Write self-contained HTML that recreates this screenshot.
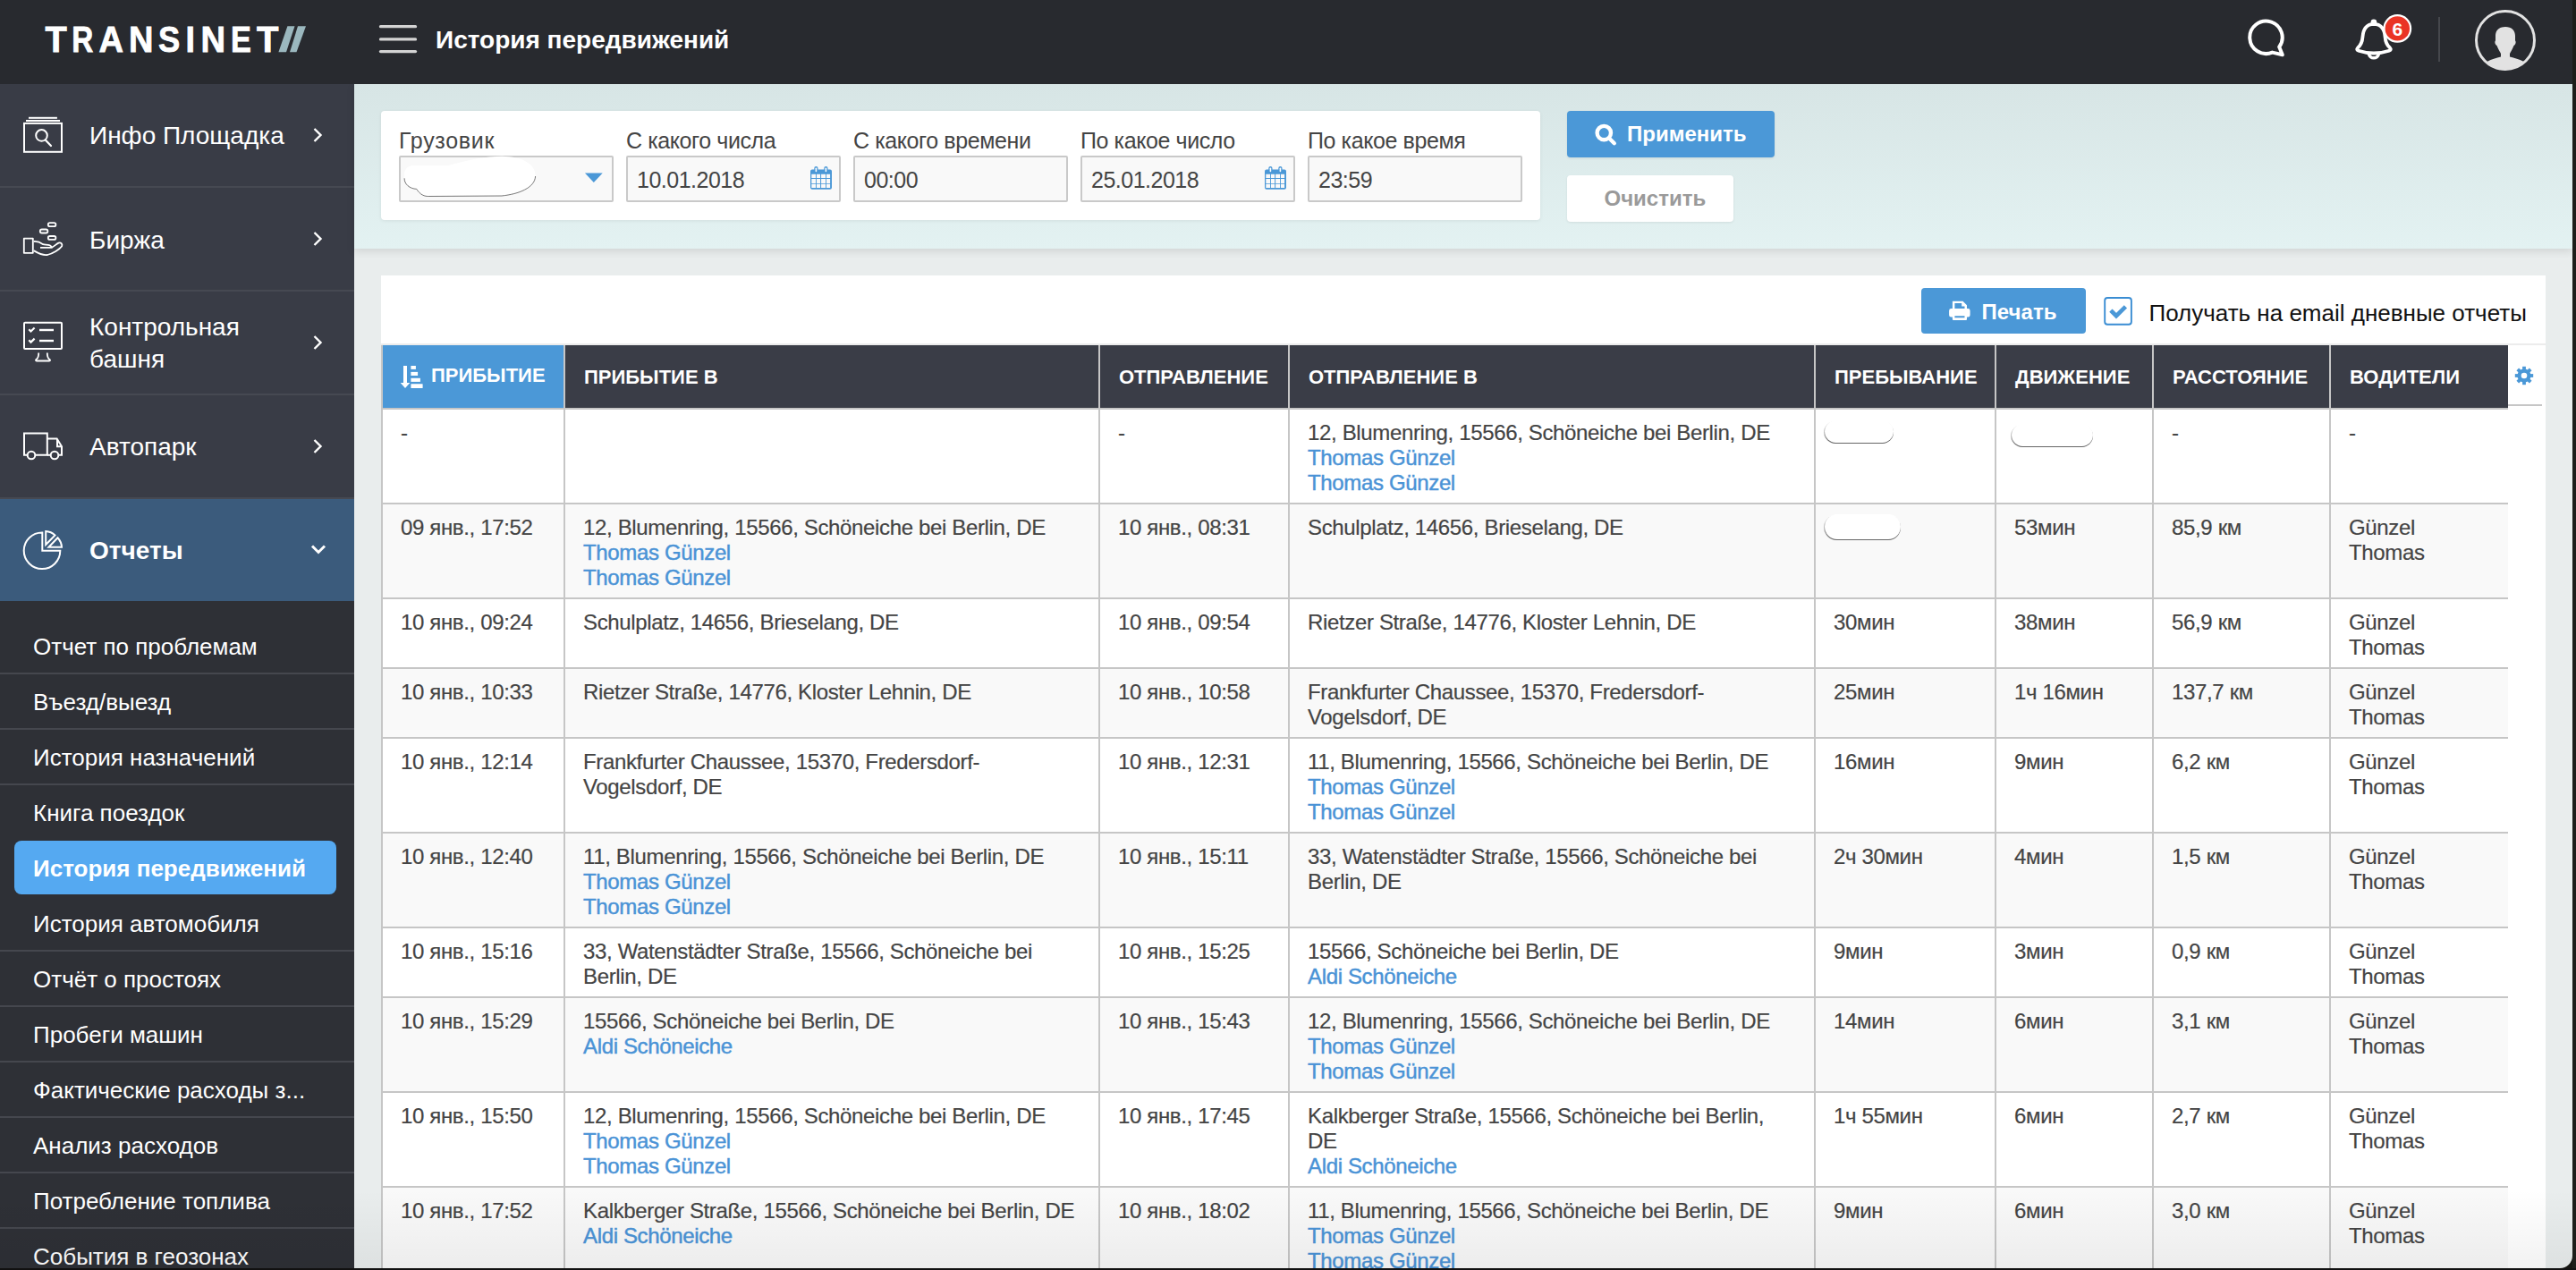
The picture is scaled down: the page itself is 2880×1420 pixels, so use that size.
<!DOCTYPE html>
<html><head><meta charset="utf-8">
<style>
*{box-sizing:border-box;margin:0;padding:0}
html,body{width:2880px;height:1420px;overflow:hidden}
body{position:relative;background:#e9eded;font-family:"Liberation Sans",sans-serif;color:#444}
.abs{position:absolute}
#hdr{position:absolute;left:0;top:0;width:2880px;height:94px;background:#282a2f}
#side{position:absolute;left:0;top:94px;width:396px;height:1326px;background:#2e3036}
.mi{position:absolute;left:0;width:396px;height:114px;background:#393c46}
.msep{position:absolute;left:0;width:396px;height:2px;background:#464952}
.mt{position:absolute;left:100px;color:#fff;font-size:28px;line-height:28px;white-space:nowrap}
.chev{position:absolute;left:346px}
.sub{position:absolute;left:37px;color:#fff;font-size:26px;line-height:26px;white-space:nowrap}
#teal{position:absolute;left:396px;top:94px;width:2480px;height:184px;background:linear-gradient(#d7e5e5,#e3f2f2);box-shadow:0 3px 9px rgba(0,0,0,.11)}
#fcard{position:absolute;left:426px;top:124px;width:1296px;height:122px;background:#fff;border-radius:4px;box-shadow:0 1px 4px rgba(0,0,0,.07)}
.lbl{position:absolute;top:145px;font-size:25px;line-height:25px;color:#444;letter-spacing:-0.4px;white-space:nowrap}
.inp{position:absolute;top:174px;width:240px;height:52px;border-radius:2px;border:2px solid #c9c9c9;background:#f9f9f9}
.itx{position:absolute;top:189px;font-size:25px;line-height:25px;color:#444;letter-spacing:-0.5px}
.btn{position:absolute;border-radius:4px;font-weight:700;font-size:24px;line-height:24px;white-space:nowrap}
#card{position:absolute;left:426px;top:308px;width:2420px;height:1200px;background:#fff}
.th{position:absolute;top:386px;height:70px;color:#fff;font-weight:700;font-size:22px;line-height:22px;white-space:nowrap}
.sorti{position:absolute;left:12px;top:14px}
.td{position:absolute;font-size:24px;line-height:28px;letter-spacing:-0.35px;color:#444;white-space:nowrap;-webkit-text-stroke:0.2px #444}
.lk{color:#4a93d6;-webkit-text-stroke:0.45px #4a93d6}
.blob{position:absolute;background:#fff;border-radius:14px;box-shadow:0 1px 0 #666, -1px 1px 0 rgba(0,0,0,.25)}
</style></head><body>

<div id="hdr">
  <svg class="abs" style="left:0;top:0" width="360" height="94">
    <g font-family="Liberation Sans" font-weight="700" font-size="40" fill="#fff" stroke="#fff" stroke-width="0.8">
      <text transform="translate(50.60 58.1) scale(0.992 1)">T</text><text transform="translate(80.34 58.1) scale(0.831 1)">R</text><text transform="translate(110.45 58.1) scale(0.952 1)">A</text><text transform="translate(144.10 58.1) scale(0.950 1)">N</text><text transform="translate(177.09 58.1) scale(0.908 1)">S</text><text transform="translate(207.51 58.1) scale(0.943 1)">I</text><text transform="translate(224.49 58.1) scale(0.954 1)">N</text><text transform="translate(257.99 58.1) scale(0.857 1)">E</text><text transform="translate(287.00 58.1) scale(1.000 1)">T</text>
    </g>
    <polygon points="311.4,58.3 320,58.3 329.5,29.3 321.4,29.3" fill="#9bb8bf"/>
    <polygon points="324,58.3 331.5,58.3 342,29.3 333,29.3" fill="#9bb8bf"/>
  </svg>
  <svg class="abs" style="left:420px;top:24px" width="50" height="40"><g stroke="#d4d4d4" stroke-width="3.3" stroke-linecap="round"><line x1="5.5" y1="5.7" x2="44.5" y2="5.7"/><line x1="5.5" y1="19.9" x2="44.5" y2="19.9"/><line x1="5.5" y1="33.6" x2="44.5" y2="33.6"/></g></svg>
  <div class="abs" style="left:487px;top:30.6px;font-size:28px;line-height:28px;font-weight:700;color:#fff;white-space:nowrap">История передвижений</div>
  <!-- chat -->
  <svg class="abs" style="left:2505px;top:15px" width="60" height="55" viewBox="0 0 60 55"><path d="M43.2 37.5 A18.2 18.2 0 1 0 35.5 43.6 L46.8 46.2 Z" fill="none" stroke="#fff" stroke-width="4" stroke-linejoin="round"/></svg>
  <!-- bell -->
  <svg class="abs" style="left:2625px;top:10px" width="80" height="65" viewBox="0 0 80 65">
    <path d="M28.9 16.8 C20 17 17 24 16.5 31 C16 38 14 41 11 43.5 C9.5 45 10 46 12 46.7 C18 48.7 23 49.5 28.9 49.5 C35 49.5 40 48.7 46 46.7 C48 46 48.5 45 47 43.5 C44 41 42 38 41.5 31 C41 24 38 17 28.9 16.8 Z" fill="none" stroke="#fff" stroke-width="3.8" stroke-linejoin="round"/>
    <circle cx="28.9" cy="14.8" r="3.3" fill="#fff"/>
    <path d="M23.4 50.3 A5.6 5.6 0 0 0 34.4 50.3" fill="none" stroke="#fff" stroke-width="3.5"/>
    <circle cx="55.3" cy="21.9" r="14.8" fill="#ea3425" stroke="#fff" stroke-width="2.2"/>
    <text x="55.3" y="29.6" text-anchor="middle" font-family="Liberation Sans" font-weight="700" font-size="21" fill="#fff">6</text>
  </svg>
  <div class="abs" style="left:2726px;top:19px;width:2px;height:50px;background:#45474c"></div>
  <!-- avatar -->
  <svg class="abs" style="left:2760px;top:5px" width="85" height="80" viewBox="0 0 85 80">
    <defs><clipPath id="avc"><circle cx="41" cy="40" r="32.5"/></clipPath></defs>
    <g clip-path="url(#avc)"><path d="M41 24.9 C34 24.9 30 29 30 35 L30 40.5 C29 41 29 44.5 31.5 46 C33 50 35 53 36 55 L36 58.5 C31 59.5 25 61.5 21.4 63.6 L15 80 L67 80 L60.8 63.6 C57 61.5 51 59.5 46 58.5 L46 55 C47 53 49 50 50.5 46 C53 44.5 53 41 52 40.5 L52 35 C52 29 48 24.9 41 24.9 Z" fill="#e2e2e2"/></g>
    <circle cx="41" cy="40" r="32.5" fill="none" stroke="#e2e2e2" stroke-width="3"/>
  </svg>
</div>

<div id="side">
  <div class="mi" style="top:0"></div>
  <div class="msep" style="top:114px"></div>
  <div class="mi" style="top:116px"></div>
  <div class="msep" style="top:230px"></div>
  <div class="mi" style="top:232px"></div>
  <div class="msep" style="top:346px"></div>
  <div class="mi" style="top:348px"></div>
  <div class="msep" style="top:462px"></div>
  <div class="mi" style="top:464px;background:#3b5b7c"></div>
</div>
<!-- sidebar icons (absolute page coords) -->
<svg class="abs" style="left:20px;top:120px" width="60" height="60" viewBox="0 0 60 60"><g fill="none" stroke="#fff" stroke-width="2"><rect x="7" y="17.9" width="42" height="31.9"/><line x1="12" y1="11.8" x2="43.9" y2="11.8"/><line x1="9" y1="15" x2="47" y2="15"/><circle cx="26.5" cy="31.4" r="6.3"/><line x1="31" y1="36.8" x2="37" y2="43" stroke-width="2.2" stroke-linecap="round"/></g></svg>
<svg class="abs" style="left:20px;top:240px" width="60" height="60" viewBox="0 0 60 60"><g fill="none" stroke="#fff" stroke-width="1.8" stroke-linejoin="round"><rect x="6.8" y="26.6" width="10" height="16.2"/><rect x="33.8" y="9.2" width="8.6" height="3.9" rx="1.95"/><rect x="24.8" y="16.5" width="8.6" height="4" rx="2"/><rect x="33.8" y="24" width="8.6" height="3.9" rx="1.95"/><path d="M17.7 30 C22 29.6 25 31 28.2 33.2 C30 33.8 33.5 33.2 35.6 34.2 C37 35 37.8 36 37.8 36.8 L25 36.8"/><path d="M37.8 36.8 C41 35 43.5 32.5 45.5 31.6 C48 30.6 50 33 49.2 35.3 C46.5 39 39 43.5 33 45 C27.5 46 22.5 43 17.7 40.2"/></g></svg>
<svg class="abs" style="left:20px;top:350px" width="60" height="60" viewBox="0 0 60 60"><g fill="none" stroke="#fff" stroke-width="2"><rect x="7" y="10.7" width="42" height="29.2" rx="1"/><path d="M12.3 18.2 L14.5 20.5 L18.6 16.5" stroke-width="2.2"/><path d="M12.3 30.3 L14.5 32.6 L18.6 28.6" stroke-width="2.2"/><line x1="24" y1="19" x2="40" y2="19" stroke-width="2.4"/><line x1="24" y1="31" x2="40" y2="31" stroke-width="2.4"/><path d="M23.2 44.5 C23.2 48 23.2 50 21 51.5 C19.5 52.5 19.8 53.5 21 53.5 L35 53.5 C36.3 53.5 36.5 52.5 35 51.5 C32.8 50 32.8 48 32.8 44.5" stroke-width="1.8"/></g></svg>
<svg class="abs" style="left:20px;top:470px" width="60" height="60" viewBox="0 0 60 60"><g fill="none" stroke="#fff" stroke-width="2"><path d="M10.7 38.8 L7 38.8 L7 14.6 L32.8 14.6 L32.8 38.8 L19.3 38.8"/><path d="M32.8 20.5 L43.6 20.5 L49 29.3 L49 38.8 L45.3 38.8"/><path d="M44 21 L44 29.3 L48.5 29.3"/><line x1="32.8" y1="38.8" x2="36.7" y2="38.8"/><circle cx="15" cy="39" r="4.3"/><circle cx="41" cy="39" r="4.3"/></g></svg>
<svg class="abs" style="left:20px;top:585px" width="60" height="60" viewBox="0 0 60 60"><g fill="none" stroke="#fff" stroke-width="2" stroke-linejoin="miter"><path d="M27.3 10.5 A20.3 20.3 0 1 0 47.3 30.8 L27.3 30.8 Z"/><path d="M31.2 9 L31.2 24 L41.5 13.5 A16 16 0 0 0 31.2 9 Z"/><path d="M34.5 26.8 L44.5 16.3 A17 17 0 0 1 49 26.8 Z"/></g></svg>
<!-- sidebar text -->
<div class="mt" style="top:138.3px">Инфо Площадка</div>
<div class="mt" style="top:254.6px">Биржа</div>
<div class="mt" style="top:348px;line-height:36px">Контрольная<br>башня</div>
<div class="mt" style="top:486.3px">Автопарк</div>
<div class="mt" style="top:602.3px;font-weight:700">Отчеты</div>
<svg class="chev" style="top:141px" width="20" height="20" viewBox="0 0 20 20"><path d="M5.5 3 L12.5 10 L5.5 17" fill="none" stroke="#fff" stroke-width="2.4"/></svg>
<svg class="chev" style="top:257px" width="20" height="20" viewBox="0 0 20 20"><path d="M5.5 3 L12.5 10 L5.5 17" fill="none" stroke="#fff" stroke-width="2.4"/></svg>
<svg class="chev" style="top:373px" width="20" height="20" viewBox="0 0 20 20"><path d="M5.5 3 L12.5 10 L5.5 17" fill="none" stroke="#fff" stroke-width="2.4"/></svg>
<svg class="chev" style="top:489px" width="20" height="20" viewBox="0 0 20 20"><path d="M5.5 3 L12.5 10 L5.5 17" fill="none" stroke="#fff" stroke-width="2.4"/></svg>
<svg class="chev" style="top:605px" width="20" height="20" viewBox="0 0 20 20"><path d="M3 5.5 L10 12.5 L17 5.5" fill="none" stroke="#fff" stroke-width="3"/></svg>
<div class="sub" style="top:710px">Отчет по проблемам</div>
<div class="sub" style="top:772px">Въезд/выезд</div>
<div class="sub" style="top:834px">История назначений</div>
<div class="sub" style="top:896px">Книга поездок</div>
<div style="position:absolute;left:16px;top:940px;width:360px;height:60px;border-radius:8px;background:#55a9f1"></div>
<div class="sub" style="top:958px;font-weight:700">История передвижений</div>
<div class="sub" style="top:1020px">История автомобиля</div>
<div class="sub" style="top:1082px">Отчёт о простоях</div>
<div class="sub" style="top:1144px">Пробеги машин</div>
<div class="sub" style="top:1206px">Фактические расходы з...</div>
<div class="sub" style="top:1268px">Анализ расходов</div>
<div class="sub" style="top:1330px">Потребление топлива</div>
<div class="sub" style="top:1392px">События в геозонах</div>
<div style="position:absolute;left:0;top:752px;width:396px;height:2px;background:#45474e"></div>
<div style="position:absolute;left:0;top:814px;width:396px;height:2px;background:#45474e"></div>
<div style="position:absolute;left:0;top:876px;width:396px;height:2px;background:#45474e"></div>
<div style="position:absolute;left:0;top:1062px;width:396px;height:2px;background:#45474e"></div>
<div style="position:absolute;left:0;top:1124px;width:396px;height:2px;background:#45474e"></div>
<div style="position:absolute;left:0;top:1186px;width:396px;height:2px;background:#45474e"></div>
<div style="position:absolute;left:0;top:1248px;width:396px;height:2px;background:#45474e"></div>
<div style="position:absolute;left:0;top:1310px;width:396px;height:2px;background:#45474e"></div>
<div style="position:absolute;left:0;top:1372px;width:396px;height:2px;background:#45474e"></div>

<div id="teal"></div>
<div id="fcard"></div>
<div class="lbl" style="left:446px;letter-spacing:0.7px">Грузовик</div>
<div class="lbl" style="left:700px">С какого числа</div>
<div class="lbl" style="left:954px">С какого времени</div>
<div class="lbl" style="left:1208px">По какое число</div>
<div class="lbl" style="left:1462px">По какое время</div>
<div class="inp" style="left:446px"></div>
<div class="inp" style="left:700px"></div>
<div class="inp" style="left:954px"></div>
<div class="inp" style="left:1208px"></div>
<div class="inp" style="left:1462px"></div>
<svg class="abs" style="left:440px;top:170px" width="260" height="62"><path d="M12.1 29.3 C11 22 14 16 20 15.2 L60 15.2 C80 10 100 4.8 121 4.8 C145 5 159 14 158.6 27 C158 40 140 47 121 49 L38.4 49.5 C32 49 28 45 25.8 41.4 C18 41 12 36 12.1 29.3 Z" fill="#fff"/><path d="M12.1 29.3 C12 36 18 41 25.8 41.4 C28 45 32 49.5 38.4 49.5 L121 49 C140 47 158 40 158.6 27" fill="none" stroke="#555" stroke-width="0.8"/></svg>
<svg class="abs" style="left:650px;top:190px" width="28" height="18"><path d="M4 3.5 L23.7 3.5 L13.85 14 Z" fill="#4b98d7"/></svg>
<div class="itx" style="left:712px">10.01.2018</div>
<div class="itx" style="left:966px">00:00</div>
<div class="itx" style="left:1220px">25.01.2018</div>
<div class="itx" style="left:1474px">23:59</div>
<svg class="abs cal" style="left:900px;top:180px" width="40" height="40" viewBox="0 0 40 40"><path d="M8 9.4 H28 A2 2 0 0 1 30 11.4 V29.8 A2 2 0 0 1 28 31.8 H8 A2 2 0 0 1 6 29.8 V11.4 A2 2 0 0 1 8 9.4 Z M7.3 14.8 V19 H12 V14.8 Z M12.9 14.8 V19 H17.1 V14.8 Z M18.1 14.8 V19 H23 V14.8 Z M23.9 14.8 V19 H28.1 V14.8 Z M7.3 20 V24.9 H12 V20 Z M12.9 20 V24.9 H17.1 V20 Z M18.1 20 V24.9 H23 V20 Z M23.9 20 V24.9 H28.1 V20 Z M7.3 25.8 V29.9 H12 V25.8 Z M12.9 25.8 V29.9 H17.1 V25.8 Z M18.1 25.8 V29.9 H23 V25.8 Z M23.9 25.8 V29.9 H28.1 V25.8 Z" fill="#4b98d7" fill-rule="evenodd"/><rect x="10.3" y="6" width="4.2" height="7" rx="2.1" fill="#4b98d7"/><rect x="21.3" y="6" width="4.2" height="7" rx="2.1" fill="#4b98d7"/><rect x="11.6" y="7.5" width="1.6" height="4.8" rx="0.8" fill="#fff"/><rect x="22.6" y="7.5" width="1.6" height="4.8" rx="0.8" fill="#fff"/></svg>
<svg class="abs cal" style="left:1408px;top:180px" width="40" height="40" viewBox="0 0 40 40"><path d="M8 9.4 H28 A2 2 0 0 1 30 11.4 V29.8 A2 2 0 0 1 28 31.8 H8 A2 2 0 0 1 6 29.8 V11.4 A2 2 0 0 1 8 9.4 Z M7.3 14.8 V19 H12 V14.8 Z M12.9 14.8 V19 H17.1 V14.8 Z M18.1 14.8 V19 H23 V14.8 Z M23.9 14.8 V19 H28.1 V14.8 Z M7.3 20 V24.9 H12 V20 Z M12.9 20 V24.9 H17.1 V20 Z M18.1 20 V24.9 H23 V20 Z M23.9 20 V24.9 H28.1 V20 Z M7.3 25.8 V29.9 H12 V25.8 Z M12.9 25.8 V29.9 H17.1 V25.8 Z M18.1 25.8 V29.9 H23 V25.8 Z M23.9 25.8 V29.9 H28.1 V25.8 Z" fill="#4b98d7" fill-rule="evenodd"/><rect x="10.3" y="6" width="4.2" height="7" rx="2.1" fill="#4b98d7"/><rect x="21.3" y="6" width="4.2" height="7" rx="2.1" fill="#4b98d7"/><rect x="11.6" y="7.5" width="1.6" height="4.8" rx="0.8" fill="#fff"/><rect x="22.6" y="7.5" width="1.6" height="4.8" rx="0.8" fill="#fff"/></svg>

<div class="btn" style="left:1752px;top:124px;width:232px;height:52px;background:#4b98d7;color:#fff;box-shadow:0 1px 3px rgba(0,0,0,.08)"><span class="abs" style="left:67px;top:14.2px">Применить</span></div>
<svg class="abs" style="left:1775px;top:130px" width="40" height="40" viewBox="0 0 40 40"><circle cx="18.3" cy="18.6" r="7.7" fill="none" stroke="#fff" stroke-width="4.4"/><line x1="25" y1="25.5" x2="29.8" y2="30.2" stroke="#fff" stroke-width="4.4" stroke-linecap="round"/></svg>
<div class="btn" style="left:1752px;top:196px;width:186px;height:52px;background:#fff;color:#9a9a9a;box-shadow:0 1px 3px rgba(0,0,0,.08)"><span class="abs" style="left:41.5px;top:13.7px">Очистить</span></div>

<div id="card"></div>
<div class="btn" style="left:2148px;top:322px;width:184px;height:51px;background:#4b98d7;color:#fff"><span class="abs" style="left:67.6px;top:14.7px">Печать</span></div>
<svg class="abs" style="left:2170px;top:330px" width="40" height="40" viewBox="0 0 40 40"><path d="M12.9 6.8 H24.5 L29 11.3 V17 H26.5 V12.6 H23.2 V9.1 H15.4 V17 H12.9 Z" fill="#fff"/><path d="M11.5 15.1 H30.2 A2.4 2.4 0 0 1 32.6 17.5 V22.2 A2.4 2.4 0 0 1 30.2 24.6 H29 V27 A1 1 0 0 1 28 28 H13.9 A1 1 0 0 1 12.9 27 V24.6 H11.5 A2.4 2.4 0 0 1 9.1 22.2 V17.5 A2.4 2.4 0 0 1 11.5 15.1 Z M15.4 23.3 V25.2 H26.5 V23.3 Z" fill="#fff" fill-rule="evenodd"/></svg>
<svg class="abs" style="left:2345px;top:325px" width="45" height="45" viewBox="0 0 45 45"><rect x="8.2" y="8" width="29.7" height="29.7" rx="3" fill="#fff" stroke="#3a8dd3" stroke-width="1.9"/><path d="M16.5 23.7 L21 28.2 L29.8 19.4" fill="none" stroke="#4b98d7" stroke-width="4.6" stroke-linecap="square" stroke-linejoin="miter"/></svg>
<div class="abs" style="left:2402.5px;top:336.8px;font-size:26px;line-height:26px;color:#111;white-space:nowrap">Получать на email дневные отчеты</div>

<div style="position:absolute;left:426px;top:384px;width:2420px;height:2px;background:#ececec"></div>
<div style="position:absolute;left:426px;top:386px;width:2px;height:1040px;background:#c6c6c6"></div>
<div class="th" style="left:428px;width:202px;background:#4b98d7">
<svg class="sorti" width="40" height="40" viewBox="0 0 40 40"><path d="M11 9h4v19h3.3L13 34 7.7 28H11z" fill="#fff"/><rect x="19.4" y="9" width="5.5" height="3.9" fill="#fff"/><rect x="19.4" y="15.9" width="7.7" height="4.1" fill="#fff"/><rect x="19.4" y="22.8" width="10.5" height="4.1" fill="#fff"/><rect x="19.4" y="29.3" width="13.2" height="4.6" rx="0.5" fill="#fff"/></svg>
<span style="position:absolute;left:54px;top:23px">ПРИБЫТИЕ</span>
</div>
<div class="th" style="left:632px;width:596px;background:#3a3d47">
<span style="position:absolute;left:21px;top:25px">ПРИБЫТИЕ В</span>
</div>
<div class="th" style="left:1230px;width:210px;background:#3a3d47">
<span style="position:absolute;left:21px;top:25px">ОТПРАВЛЕНИЕ</span>
</div>
<div class="th" style="left:1442px;width:586px;background:#3a3d47">
<span style="position:absolute;left:21px;top:25px">ОТПРАВЛЕНИЕ В</span>
</div>
<div class="th" style="left:2030px;width:200px;background:#3a3d47">
<span style="position:absolute;left:21px;top:25px">ПРЕБЫВАНИЕ</span>
</div>
<div class="th" style="left:2232px;width:174px;background:#3a3d47">
<span style="position:absolute;left:21px;top:25px">ДВИЖЕНИЕ</span>
</div>
<div class="th" style="left:2408px;width:196px;background:#3a3d47">
<span style="position:absolute;left:21px;top:25px">РАССТОЯНИЕ</span>
</div>
<div class="th" style="left:2606px;width:198px;background:#3a3d47">
<span style="position:absolute;left:21px;top:25px">ВОДИТЕЛИ</span>
</div>
<div style="position:absolute;left:428px;top:456px;width:2376px;height:2px;background:#c6c6c6"></div>
<div style="position:absolute;left:2804px;top:452px;width:38px;height:2px;background:#c6c6c6"></div>
<svg style="position:absolute;left:2810px;top:408px" width="24" height="24" viewBox="-12 -12 24 24"><g fill="#4b98d7"><circle r="7.6"/><rect x="-1.9" y="-10.2" width="3.8" height="4" transform="rotate(0)"/><rect x="-1.9" y="-10.2" width="3.8" height="4" transform="rotate(45)"/><rect x="-1.9" y="-10.2" width="3.8" height="4" transform="rotate(90)"/><rect x="-1.9" y="-10.2" width="3.8" height="4" transform="rotate(135)"/><rect x="-1.9" y="-10.2" width="3.8" height="4" transform="rotate(180)"/><rect x="-1.9" y="-10.2" width="3.8" height="4" transform="rotate(225)"/><rect x="-1.9" y="-10.2" width="3.8" height="4" transform="rotate(270)"/><rect x="-1.9" y="-10.2" width="3.8" height="4" transform="rotate(315)"/></g><circle r="3.3" fill="#fff"/></svg>
<div style="position:absolute;left:428px;top:458px;width:2376px;height:104px;background:#ffffff"></div>
<div style="position:absolute;left:428px;top:562px;width:2376px;height:2px;background:#c6c6c6"></div>
<div class="td" style="left:448px;top:470px">-</div>
<div class="td" style="left:1250px;top:470px">-</div>
<div class="td" style="left:1462px;top:470px">12, Blumenring, 15566, Schöneiche bei Berlin, DE<br><span class="lk">Thomas Günzel</span><br><span class="lk">Thomas Günzel</span></div>
<div class="blob" style="left:2040px;top:470px;width:77px;height:25px"></div>
<div class="blob" style="left:2249px;top:474px;width:91px;height:25px"></div>
<div class="td" style="left:2428px;top:470px">-</div>
<div class="td" style="left:2626px;top:470px">-</div>
<div style="position:absolute;left:428px;top:564px;width:2376px;height:104px;background:#f9f9f9"></div>
<div style="position:absolute;left:428px;top:668px;width:2376px;height:2px;background:#c6c6c6"></div>
<div class="td" style="left:448px;top:576px">09 янв., 17:52</div>
<div class="td" style="left:652px;top:576px">12, Blumenring, 15566, Schöneiche bei Berlin, DE<br><span class="lk">Thomas Günzel</span><br><span class="lk">Thomas Günzel</span></div>
<div class="td" style="left:1250px;top:576px">10 янв., 08:31</div>
<div class="td" style="left:1462px;top:576px">Schulplatz, 14656, Brieselang, DE</div>
<div class="blob" style="left:2040px;top:575px;width:85px;height:28px"></div>
<div class="td" style="left:2252px;top:576px">53мин</div>
<div class="td" style="left:2428px;top:576px">85,9 км</div>
<div class="td" style="left:2626px;top:576px">Günzel<br>Thomas</div>
<div style="position:absolute;left:428px;top:670px;width:2376px;height:76px;background:#ffffff"></div>
<div style="position:absolute;left:428px;top:746px;width:2376px;height:2px;background:#c6c6c6"></div>
<div class="td" style="left:448px;top:682px">10 янв., 09:24</div>
<div class="td" style="left:652px;top:682px">Schulplatz, 14656, Brieselang, DE</div>
<div class="td" style="left:1250px;top:682px">10 янв., 09:54</div>
<div class="td" style="left:1462px;top:682px">Rietzer Straße, 14776, Kloster Lehnin, DE</div>
<div class="td" style="left:2050px;top:682px">30мин</div>
<div class="td" style="left:2252px;top:682px">38мин</div>
<div class="td" style="left:2428px;top:682px">56,9 км</div>
<div class="td" style="left:2626px;top:682px">Günzel<br>Thomas</div>
<div style="position:absolute;left:428px;top:748px;width:2376px;height:76px;background:#f9f9f9"></div>
<div style="position:absolute;left:428px;top:824px;width:2376px;height:2px;background:#c6c6c6"></div>
<div class="td" style="left:448px;top:760px">10 янв., 10:33</div>
<div class="td" style="left:652px;top:760px">Rietzer Straße, 14776, Kloster Lehnin, DE</div>
<div class="td" style="left:1250px;top:760px">10 янв., 10:58</div>
<div class="td" style="left:1462px;top:760px">Frankfurter Chaussee, 15370, Fredersdorf-<br>Vogelsdorf, DE</div>
<div class="td" style="left:2050px;top:760px">25мин</div>
<div class="td" style="left:2252px;top:760px">1ч 16мин</div>
<div class="td" style="left:2428px;top:760px">137,7 км</div>
<div class="td" style="left:2626px;top:760px">Günzel<br>Thomas</div>
<div style="position:absolute;left:428px;top:826px;width:2376px;height:104px;background:#ffffff"></div>
<div style="position:absolute;left:428px;top:930px;width:2376px;height:2px;background:#c6c6c6"></div>
<div class="td" style="left:448px;top:838px">10 янв., 12:14</div>
<div class="td" style="left:652px;top:838px">Frankfurter Chaussee, 15370, Fredersdorf-<br>Vogelsdorf, DE</div>
<div class="td" style="left:1250px;top:838px">10 янв., 12:31</div>
<div class="td" style="left:1462px;top:838px">11, Blumenring, 15566, Schöneiche bei Berlin, DE<br><span class="lk">Thomas Günzel</span><br><span class="lk">Thomas Günzel</span></div>
<div class="td" style="left:2050px;top:838px">16мин</div>
<div class="td" style="left:2252px;top:838px">9мин</div>
<div class="td" style="left:2428px;top:838px">6,2 км</div>
<div class="td" style="left:2626px;top:838px">Günzel<br>Thomas</div>
<div style="position:absolute;left:428px;top:932px;width:2376px;height:104px;background:#f9f9f9"></div>
<div style="position:absolute;left:428px;top:1036px;width:2376px;height:2px;background:#c6c6c6"></div>
<div class="td" style="left:448px;top:944px">10 янв., 12:40</div>
<div class="td" style="left:652px;top:944px">11, Blumenring, 15566, Schöneiche bei Berlin, DE<br><span class="lk">Thomas Günzel</span><br><span class="lk">Thomas Günzel</span></div>
<div class="td" style="left:1250px;top:944px">10 янв., 15:11</div>
<div class="td" style="left:1462px;top:944px">33, Watenstädter Straße, 15566, Schöneiche bei<br>Berlin, DE</div>
<div class="td" style="left:2050px;top:944px">2ч 30мин</div>
<div class="td" style="left:2252px;top:944px">4мин</div>
<div class="td" style="left:2428px;top:944px">1,5 км</div>
<div class="td" style="left:2626px;top:944px">Günzel<br>Thomas</div>
<div style="position:absolute;left:428px;top:1038px;width:2376px;height:76px;background:#ffffff"></div>
<div style="position:absolute;left:428px;top:1114px;width:2376px;height:2px;background:#c6c6c6"></div>
<div class="td" style="left:448px;top:1050px">10 янв., 15:16</div>
<div class="td" style="left:652px;top:1050px">33, Watenstädter Straße, 15566, Schöneiche bei<br>Berlin, DE</div>
<div class="td" style="left:1250px;top:1050px">10 янв., 15:25</div>
<div class="td" style="left:1462px;top:1050px">15566, Schöneiche bei Berlin, DE<br><span class="lk">Aldi Schöneiche</span></div>
<div class="td" style="left:2050px;top:1050px">9мин</div>
<div class="td" style="left:2252px;top:1050px">3мин</div>
<div class="td" style="left:2428px;top:1050px">0,9 км</div>
<div class="td" style="left:2626px;top:1050px">Günzel<br>Thomas</div>
<div style="position:absolute;left:428px;top:1116px;width:2376px;height:104px;background:#f9f9f9"></div>
<div style="position:absolute;left:428px;top:1220px;width:2376px;height:2px;background:#c6c6c6"></div>
<div class="td" style="left:448px;top:1128px">10 янв., 15:29</div>
<div class="td" style="left:652px;top:1128px">15566, Schöneiche bei Berlin, DE<br><span class="lk">Aldi Schöneiche</span></div>
<div class="td" style="left:1250px;top:1128px">10 янв., 15:43</div>
<div class="td" style="left:1462px;top:1128px">12, Blumenring, 15566, Schöneiche bei Berlin, DE<br><span class="lk">Thomas Günzel</span><br><span class="lk">Thomas Günzel</span></div>
<div class="td" style="left:2050px;top:1128px">14мин</div>
<div class="td" style="left:2252px;top:1128px">6мин</div>
<div class="td" style="left:2428px;top:1128px">3,1 км</div>
<div class="td" style="left:2626px;top:1128px">Günzel<br>Thomas</div>
<div style="position:absolute;left:428px;top:1222px;width:2376px;height:104px;background:#ffffff"></div>
<div style="position:absolute;left:428px;top:1326px;width:2376px;height:2px;background:#c6c6c6"></div>
<div class="td" style="left:448px;top:1234px">10 янв., 15:50</div>
<div class="td" style="left:652px;top:1234px">12, Blumenring, 15566, Schöneiche bei Berlin, DE<br><span class="lk">Thomas Günzel</span><br><span class="lk">Thomas Günzel</span></div>
<div class="td" style="left:1250px;top:1234px">10 янв., 17:45</div>
<div class="td" style="left:1462px;top:1234px">Kalkberger Straße, 15566, Schöneiche bei Berlin,<br>DE<br><span class="lk">Aldi Schöneiche</span></div>
<div class="td" style="left:2050px;top:1234px">1ч 55мин</div>
<div class="td" style="left:2252px;top:1234px">6мин</div>
<div class="td" style="left:2428px;top:1234px">2,7 км</div>
<div class="td" style="left:2626px;top:1234px">Günzel<br>Thomas</div>
<div style="position:absolute;left:428px;top:1328px;width:2376px;height:104px;background:#f9f9f9"></div>
<div style="position:absolute;left:428px;top:1432px;width:2376px;height:2px;background:#c6c6c6"></div>
<div class="td" style="left:448px;top:1340px">10 янв., 17:52</div>
<div class="td" style="left:652px;top:1340px">Kalkberger Straße, 15566, Schöneiche bei Berlin, DE<br><span class="lk">Aldi Schöneiche</span></div>
<div class="td" style="left:1250px;top:1340px">10 янв., 18:02</div>
<div class="td" style="left:1462px;top:1340px">11, Blumenring, 15566, Schöneiche bei Berlin, DE<br><span class="lk">Thomas Günzel</span><br><span class="lk">Thomas Günzel</span></div>
<div class="td" style="left:2050px;top:1340px">9мин</div>
<div class="td" style="left:2252px;top:1340px">6мин</div>
<div class="td" style="left:2428px;top:1340px">3,0 км</div>
<div class="td" style="left:2626px;top:1340px">Günzel<br>Thomas</div>
<div style="position:absolute;left:630px;top:386px;width:2px;height:1040px;background:#c6c6c6"></div>
<div style="position:absolute;left:1228px;top:386px;width:2px;height:1040px;background:#c6c6c6"></div>
<div style="position:absolute;left:1440px;top:386px;width:2px;height:1040px;background:#c6c6c6"></div>
<div style="position:absolute;left:2028px;top:386px;width:2px;height:1040px;background:#c6c6c6"></div>
<div style="position:absolute;left:2230px;top:386px;width:2px;height:1040px;background:#c6c6c6"></div>
<div style="position:absolute;left:2406px;top:386px;width:2px;height:1040px;background:#c6c6c6"></div>
<div style="position:absolute;left:2604px;top:386px;width:2px;height:1040px;background:#c6c6c6"></div>

<div class="abs" style="left:0;top:1330px;width:2876px;height:88px;background:linear-gradient(rgba(0,0,0,0),rgba(0,0,0,.05))"></div>
<div class="abs" style="left:2876px;top:0;width:4px;height:1420px;background:#1d1e1a"></div>
<div class="abs" style="left:0;top:1418px;width:2880px;height:2px;background:#111"></div>
<svg class="abs" style="left:2862px;top:1404px" width="18" height="16"><path d="M14 0 V14 H0 A14 14 0 0 0 14 0 Z" fill="#151612"/></svg>
</body></html>
